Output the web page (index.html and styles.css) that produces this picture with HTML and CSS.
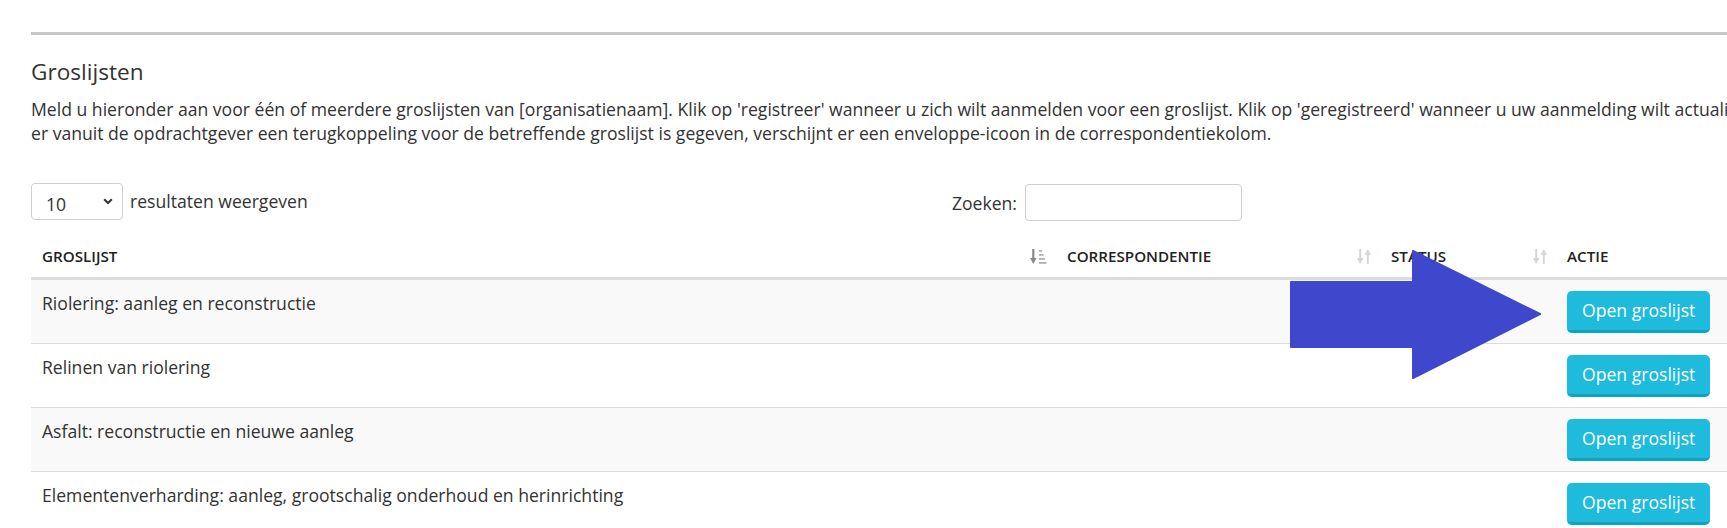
FILE: index.html
```html
<!DOCTYPE html>
<html lang="nl">
<head>
  <meta charset="UTF-8">
  <meta name="viewport" content="width=device-width, initial-scale=1.0">
  <title>Groslijsten</title>
  <link rel="stylesheet" href="styles.css">
</head>
<body>
  <div class="page">
    <hr class="divider">
    <h2 class="title">Groslijsten</h2>
    <p class="intro">Meld u hieronder aan voor één of meerdere groslijsten van [organisatienaam]. Klik op 'registreer' wanneer u zich wilt aanmelden voor een groslijst. Klik op 'geregistreerd' wanneer u uw aanmelding wilt actualiseren. Als<br>er vanuit de opdrachtgever een terugkoppeling voor de betreffende groslijst is gegeven, verschijnt er een enveloppe-icoon in de correspondentiekolom.</p>

    <div class="controls">
      <label class="length">
        <span class="select-wrap">
          <select>
            <option>10</option>
            <option>25</option>
            <option>50</option>
            <option>100</option>
          </select>
          <svg class="chevron" viewBox="0 0 10 7" width="10" height="7"><path d="M1.2 1.2l3.8 3.8 3.8-3.8" fill="none" stroke="#333" stroke-width="2"/></svg>
        </span>
        <span>resultaten weergeven</span>
      </label>
      <label class="search">
        <span>Zoeken:</span>
        <input type="search">
      </label>
    </div>

    <table class="lists">
      <colgroup>
        <col class="col-name">
        <col class="col-mail">
        <col class="col-status">
        <col class="col-action">
      </colgroup>
      <thead>
        <tr>
          <th>
            <div class="th-inner">
              <span>Groslijst</span>
              <svg class="sort" viewBox="0 0 17 15" width="17" height="15">
                <rect x="2.2" y="0" width="2.2" height="10" fill="#8a8a8a"/>
                <polygon points="0,9 6.6,9 3.3,15" fill="#8a8a8a"/>
                <rect x="9" y="1" width="3" height="1.8" fill="#b0b0b0"/>
                <rect x="9" y="5" width="4.5" height="1.8" fill="#b0b0b0"/>
                <rect x="9" y="9" width="6" height="1.8" fill="#b0b0b0"/>
                <rect x="9" y="13" width="7.5" height="1.8" fill="#b0b0b0"/>
              </svg>
            </div>
          </th>
          <th>
            <div class="th-inner">
              <span>Correspondentie</span>
              <svg class="sort" viewBox="0 0 14 15" width="14" height="15">
                <rect x="2.2" y="0" width="2" height="10" fill="#d6d6d6"/>
                <polygon points="0,9 6.4,9 3.2,15" fill="#d6d6d6"/>
                <rect x="9.8" y="5" width="2" height="10" fill="#d6d6d6"/>
                <polygon points="7.6,6 14,6 10.8,0" fill="#d6d6d6"/>
              </svg>
            </div>
          </th>
          <th>
            <div class="th-inner">
              <span>Status</span>
              <svg class="sort" viewBox="0 0 14 15" width="14" height="15">
                <rect x="2.2" y="0" width="2" height="10" fill="#d6d6d6"/>
                <polygon points="0,9 6.4,9 3.2,15" fill="#d6d6d6"/>
                <rect x="9.8" y="5" width="2" height="10" fill="#d6d6d6"/>
                <polygon points="7.6,6 14,6 10.8,0" fill="#d6d6d6"/>
              </svg>
            </div>
          </th>
          <th><div class="th-inner"><span>Actie</span></div></th>
        </tr>
      </thead>
      <tbody>
        <tr>
          <td>Riolering: aanleg en reconstructie</td>
          <td></td>
          <td></td>
          <td><button class="btn-open">Open groslijst</button></td>
        </tr>
        <tr>
          <td>Relinen van riolering</td>
          <td></td>
          <td></td>
          <td><button class="btn-open">Open groslijst</button></td>
        </tr>
        <tr>
          <td>Asfalt: reconstructie en nieuwe aanleg</td>
          <td></td>
          <td></td>
          <td><button class="btn-open">Open groslijst</button></td>
        </tr>
        <tr>
          <td>Elementenverharding: aanleg, grootschalig onderhoud en herinrichting</td>
          <td></td>
          <td></td>
          <td><button class="btn-open">Open groslijst</button></td>
        </tr>
      </tbody>
    </table>

    <!-- annotation arrow drawn over the table -->
    <svg class="pointer" viewBox="0 0 254 131" width="254" height="131">
      <polygon points="3,33 125,33 125,2 252,65 125,129 125,98 3,98" fill="#3f48cc" stroke="#3f48cc" stroke-width="2" stroke-linejoin="round"/>
    </svg>
  </div>
</body>
</html>
```

FILE: styles.css
```css
html, body {
  margin: 0;
  overflow: hidden;
}

body {
  font-family: 'Open Sans', 'Liberation Sans', sans-serif;
  font-size: 17.6px;
  color: #333;
  background: #fff;
}

.page {
  position: relative;
  width: 1800px;
  padding: 32px 0 0 31px;
}

.divider {
  margin: 0;
  border: none;
  border-top: 3px solid #c6c6c6;
}

.title {
  margin: 22px 0 0;
  font-size: 22.6px;
  font-weight: 400;
  line-height: 30px;
  color: #333;
}

.intro {
  margin: 10px 0 0;
  line-height: 24px;
}

.controls {
  width: 1211px;
  margin-top: 39px;
  display: flex;
  justify-content: space-between;
  align-items: center;
}

.length,
.search {
  display: flex;
  align-items: center;
  gap: 7px;
}

.search {
  gap: 8px;
}

.select-wrap {
  position: relative;
  display: inline-block;
}

.select-wrap select {
  appearance: none;
  -webkit-appearance: none;
  width: 92px;
  height: 37px;
  padding: 5px 0 0 14px;
  font-family: inherit;
  font-size: 17.6px;
  color: #333;
  background: #fff;
  border: 1px solid #cfcfcf;
  border-radius: 4px;
  outline: none;
}

.select-wrap .chevron {
  position: absolute;
  right: 10px;
  top: 15px;
  pointer-events: none;
}

.length span {
  line-height: 24px;
  margin-top: -3px;
}

.search input {
  width: 217px;
  height: 37px;
  box-sizing: border-box;
  border: 1px solid #cfcfcf;
  border-radius: 4px;
  font-family: inherit;
  font-size: 17.6px;
  outline: none;
}

.lists {
  margin-top: 10px;
  border-collapse: collapse;
  table-layout: fixed;
  width: 1725px;
}

.col-name { width: 1025px; }
.col-mail { width: 324px; }
.col-status { width: 176px; }
.col-action { width: 200px; }

.lists th {
  padding: 13px 9px 9px 11px;
  text-align: left;
  font-size: 15.2px;
  font-weight: 600;
  text-transform: uppercase;
  color: #222;
  line-height: 24px;
  border-bottom: 3px solid #dcdcdc;
}

.th-inner {
  display: flex;
  justify-content: space-between;
  align-items: center;
}

.lists td {
  padding: 11px 11px 10px;
  vertical-align: top;
  line-height: 24px;
  border-bottom: 1px solid #dcdcdc;
}

.lists tbody tr:nth-child(odd) {
  background: #f9f9f9;
}

.btn-open {
  display: block;
  padding: 7px 15px 8px;
  font-family: inherit;
  font-size: 17.6px;
  line-height: 24px;
  color: #fff;
  background: #1ebbdc;
  border: none;
  border-bottom: 3px solid #0aa4c4;
  border-radius: 5px;
  cursor: pointer;
}

.pointer {
  position: absolute;
  left: 1288px;
  top: 249px;
}
```
